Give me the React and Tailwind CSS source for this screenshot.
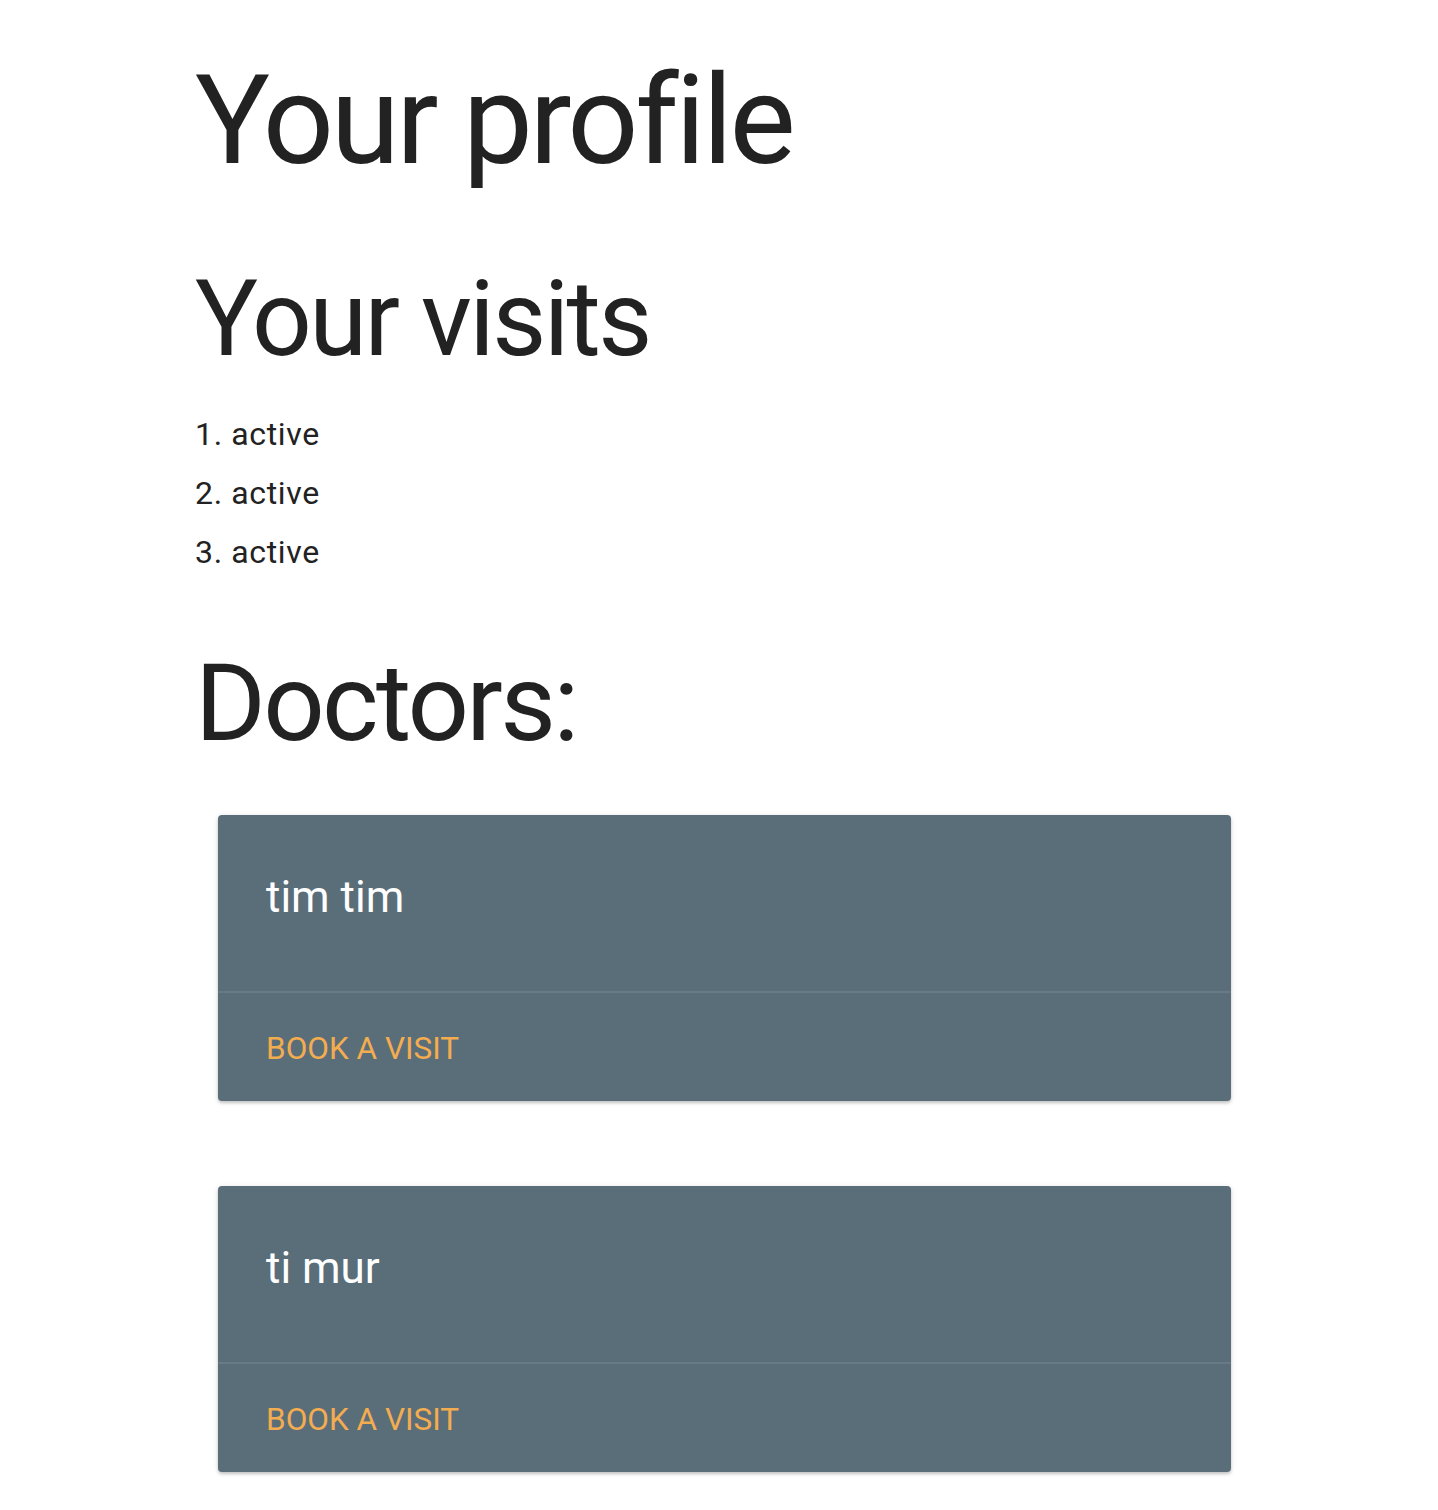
import React from "react";

const doctors = ["tim tim", "ti mur"];

function DoctorCard({ name }) {
  return (
    <div className="w-[1013px] rounded-[4px] bg-[#5a6e7a] shadow-[0_2px_3px_rgba(0,0,0,0.18),0_1px_6px_rgba(0,0,0,0.1)]">
      <div className="px-12 pt-[50px] pb-[46px]">
        <div className="mb-4 text-[44px] leading-[64px] text-white">{name}</div>
      </div>
      <div className="border-t-2 border-[#677a86] px-12 pt-[34px] pb-[30px]">
        <a href="#" className="text-[31.5px] leading-[44px] uppercase text-[#f3ac4f]">
          Book a visit
        </a>
      </div>
    </div>
  );
}

export default function App() {
  return (
    <div className="min-h-[1510px] bg-white font-['Roboto',sans-serif] text-[#222]">
      <div className="pl-[195px]">
        <h1 className="pt-[58px] text-[125px] leading-none tracking-[-0.027em]">Your profile</h1>
        <h2 className="mt-[84px] text-[105px] leading-none tracking-[-0.025em]">Your visits</h2>
        <ol className="mt-[33px] text-[32px] leading-[59px] tracking-[0.02em]">
          {["active", "active", "active"].map((s, i) => (
            <li key={i}>
              {i + 1}. {s}
            </li>
          ))}
        </ol>
        <h2 className="mt-[67px] text-[108px] leading-none tracking-[-0.025em]">Doctors:</h2>
      </div>

      {/* cards */}
      <div className="mt-[58px] flex flex-col gap-[85px] pl-[218px] pb-10">
        {doctors.map((d) => (
          <DoctorCard key={d} name={d} />
        ))}
      </div>
    </div>
  );
}
